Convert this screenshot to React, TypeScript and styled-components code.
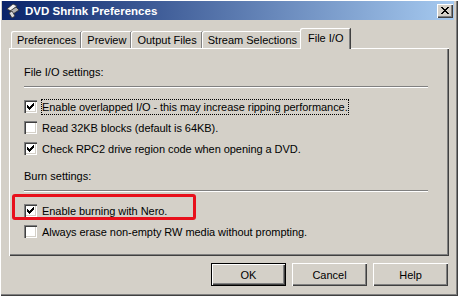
import styled, { createGlobalStyle, css } from "styled-components";

const Global = createGlobalStyle`
  body {
    margin: 0;
    background: #d4d0c8;
  }
`;

const Window = styled.div`
  width: 458px;
  height: 296px;
  box-sizing: border-box;
  padding: 1px 4px 3px 2px;
  background: #d4d0c8;
  font-family: "Liberation Sans", Arial, sans-serif;
  font-size: 11px;
  color: #000;
  box-shadow: inset 1px 1px #fff, inset -1px -1px #404040, inset -2px -2px #808080;
  display: flex;
  flex-direction: column;
`;

const TitleBar = styled.div`
  height: 19px;
  display: flex;
  align-items: center;
  gap: 4px;
  padding-left: 3px;
  padding-right: 1px;
  background: linear-gradient(to right, #0a246a, #a6caf0);
  color: #fff;
  font-weight: bold;
  font-size: 11.5px;
`;

const TitleText = styled.span`
  flex: 1;
  white-space: nowrap;
`;

const CloseButton = styled.div`
  width: 16px;
  height: 14px;
  box-sizing: border-box;
  background: #d4d0c8;
  box-shadow: inset 1px 1px #fff, inset -1px -1px #404040, inset -2px -2px #808080;
  display: grid;
  place-items: center;
`;

const Body = styled.div`
  flex: 1;
  padding: 8px 5px 0 7px;
  display: flex;
  flex-direction: column;
`;

const TabRow = styled.div`
  height: 20px;
  display: flex;
  align-items: flex-end;
  padding-left: 2px;
  position: relative;
  z-index: 1;
`;

const Tab = styled.div<{ $active?: boolean }>`
  height: 17px;
  box-sizing: border-box;
  padding: 0 5px 0 6px;
  display: flex;
  align-items: center;
  background: #d4d0c8;
  border-top-left-radius: 2px;
  border-top-right-radius: 1px;
  box-shadow: inset 1px 1px #fff, inset -1px 0 #808080, 1px 0 #404040;
  white-space: nowrap;

  ${(p) =>
    p.$active &&
    css`
      height: 21px;
      margin: 0 -1px -1px -2px;
      padding: 0 7px 2px 8px;
      position: relative;
      z-index: 2;
    `}
`;

const Panel = styled.div`
  height: 208px;
  box-sizing: border-box;
  padding: 18px 21px 0 15px;
  box-shadow: inset 1px 1px #fff, inset -1px -1px #404040, inset -2px -2px #808080;
  display: flex;
  flex-direction: column;
  gap: 11px;
`;

const Section = styled.div`
  display: flex;
  flex-direction: column;
`;

const Heading = styled.div`
  line-height: 13px;
  margin-bottom: 7px;
`;

const Separator = styled.div`
  border-top: 1px solid #808080;
  border-bottom: 1px solid #fff;
  margin-bottom: 8px;
`;

const Row = styled.div<{ $marked?: boolean }>`
  height: 21px;
  display: flex;
  align-items: center;
  gap: 4px;
  position: relative;

  ${(p) =>
    p.$marked &&
    css`
      &::after {
        content: "";
        position: absolute;
        left: -12px;
        top: -6px;
        width: 184px;
        height: 26px;
        box-sizing: border-box;
        border: 3px solid #e8101c;
        border-radius: 3px;
      }
    `}
`;

const Box = styled.div`
  width: 13px;
  height: 13px;
  flex: none;
  background: #fff;
  box-shadow: inset 1px 1px #808080, inset 2px 2px #404040, inset -1px -1px #fff,
    inset -2px -2px #d4d0c8;
  display: block;
`;

const Label = styled.span<{ $focused?: boolean }>`
  line-height: 14px;
  letter-spacing: -0.05px;
  border: 1px dotted ${(p) => (p.$focused ? "#000" : "transparent")};
  white-space: nowrap;
`;

const ButtonRow = styled.div`
  display: flex;
  justify-content: flex-end;
  gap: 6px;
  margin-top: 7px;
  padding-right: 1px;
`;

const Button = styled.div<{ $default?: boolean }>`
  width: 75px;
  height: 23px;
  box-sizing: border-box;
  display: grid;
  place-items: center;
  box-shadow: inset 1px 1px #fff, inset -1px -1px #404040, inset -2px -2px #808080;

  ${(p) =>
    p.$default &&
    css`
      border: 1px solid #000;
    `}
`;

function AppIcon() {
  return (
    <svg width="16" height="16" viewBox="0 0 16 16">
      <path d="M2 6 L8 1 L12 3 L6 8 Z" fill="#f0f0f0" stroke="#303030" strokeWidth="0.8" />
      <path d="M5 8 L11 4 L14 7 L8 11 Z" fill="#b0b0b0" stroke="#303030" strokeWidth="0.8" />
      <path d="M4 10 L7 8 L10 13 L7 15 Z" fill="#d8d8d8" stroke="#303030" strokeWidth="0.8" />
    </svg>
  );
}

function CloseGlyph() {
  return (
    <svg width="8" height="7" viewBox="0 0 8 7" shapeRendering="crispEdges">
      <path
        d="M0 0h2v1h-2z M6 0h2v1h-2z M1 1h2v1h-2z M5 1h2v1h-2z M2 2h4v1h-4z M3 3h2v1h-2z M2 4h4v1h-4z M1 5h2v1h-2z M5 5h2v1h-2z M0 6h2v1h-2z M6 6h2v1h-2z"
        fill="#000"
      />
    </svg>
  );
}

function Checkbox({ checked }: { checked?: boolean }) {
  return (
    <Box>
      {checked && (
        <svg width="13" height="13" viewBox="0 0 13 13" shapeRendering="crispEdges">
          <path
            d="M3 5h1v3h-1z M4 6h1v3h-1z M5 7h1v3h-1z M6 6h1v3h-1z M7 5h1v3h-1z M8 4h1v3h-1z M9 3h1v3h-1z"
            fill="#000"
          />
        </svg>
      )}
    </Box>
  );
}

const tabs = ["Preferences", "Preview", "Output Files", "Stream Selections", "File I/O"];

const fileOptions = [
  { text: "Enable overlapped I/O - this may increase ripping performance.", checked: true, focused: true },
  { text: "Read 32KB blocks (default is 64KB).", checked: false },
  { text: "Check RPC2 drive region code when opening a DVD.", checked: true },
];

const burnOptions = [
  { text: "Enable burning with Nero.", checked: true, marked: true },
  { text: "Always erase non-empty RW media without prompting.", checked: false },
];

export default function App() {
  return (
    <>
      <Global />
      <Window>
        <TitleBar>
          <AppIcon />
          <TitleText>DVD Shrink Preferences</TitleText>
          <CloseButton>
            <CloseGlyph />
          </CloseButton>
        </TitleBar>
        <Body>
          <TabRow>
            {tabs.map((t) => (
              <Tab key={t} $active={t === "File I/O"}>
                {t}
              </Tab>
            ))}
          </TabRow>
          <Panel>
            <Section>
              <Heading>File I/O settings:</Heading>
              <Separator />
              {fileOptions.map((o) => (
                <Row key={o.text}>
                  <Checkbox checked={o.checked} />
                  <Label $focused={o.focused}>{o.text}</Label>
                </Row>
              ))}
            </Section>
            <Section>
              <Heading>Burn settings:</Heading>
              <Separator />
              {burnOptions.map((o) => (
                <Row key={o.text} $marked={o.marked}>
                  <Checkbox checked={o.checked} />
                  <Label>{o.text}</Label>
                </Row>
              ))}
            </Section>
          </Panel>
          <ButtonRow>
            <Button $default>OK</Button>
            <Button>Cancel</Button>
            <Button>Help</Button>
          </ButtonRow>
        </Body>
      </Window>
    </>
  );
}
